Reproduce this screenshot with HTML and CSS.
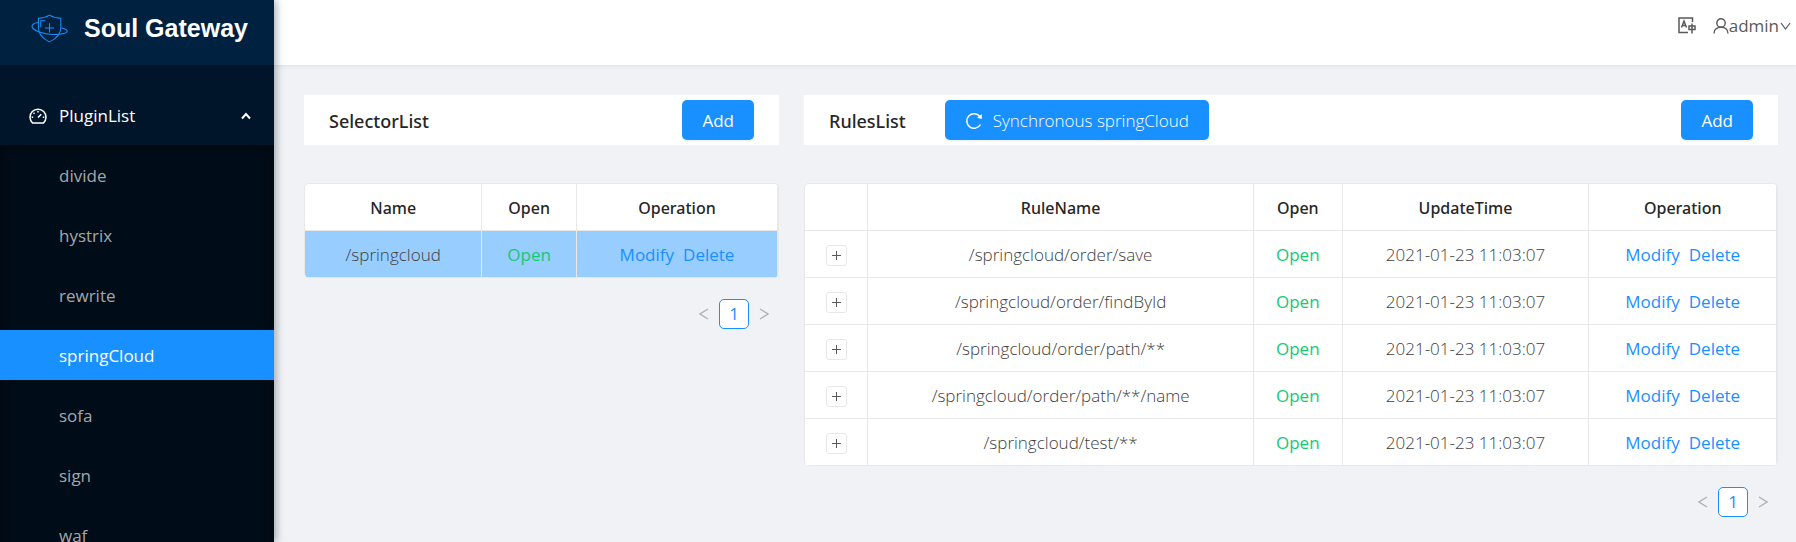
FILE: index.html
```html
<!DOCTYPE html>
<html lang="en">
<head>
<meta charset="utf-8">
<title>Soul Gateway</title>
<link rel="stylesheet" href="styles.css">
</head>
<body>
<div class="app">
  <aside class="sidebar">
    <div class="brand">
      <svg class="brand-logo" viewBox="0 0 36 28" aria-hidden="true">
        <path d="M18 1 C14.500 3.200 11 4 7.200 4 V13 C7.200 20 11.500 24 18 27 C24.500 24 29 20 29 13 V4 C25.500 4 21.500 3.200 18 1 Z"/>
        <path d="M7 8 C2.500 9 .500 10.500 1 12.300 C2 16 12 19.500 21 19.800 C30 20 35.500 18.500 35.200 16.500 C35 15 32.500 14 29.500 13.200"/>
        <path d="M9.500 13 V6.500 H14 M18 9 V18 M13.500 13.500 H22.500"/>
      </svg>
      <h1 class="brand-name">Soul Gateway</h1>
    </div>
    <nav class="menu">
      <button class="menu-title" type="button" aria-expanded="true">
        <svg class="icon-dash" viewBox="0 0 18 16" aria-hidden="true">
          <path d="M3.500 15 A8 8 0 1 1 14.500 15 Z"/>
          <path d="M9 9.500 L12.300 6.200 M9 3 V4.500 M4.500 4.800 L5.500 5.800 M2.700 9.200 H4.200 M13.800 9.200 H15.300"/>
        </svg>
        <span class="menu-label">PluginList</span>
        <svg class="icon-up" viewBox="0 0 10 8" aria-hidden="true"><path d="M1 6.500 L5 2 L9 6.500"/></svg>
      </button>
      <div class="submenu">
        <a class="menu-item" href="#">divide</a>
        <a class="menu-item" href="#">hystrix</a>
        <a class="menu-item" href="#">rewrite</a>
        <a class="menu-item active" href="#">springCloud</a>
        <a class="menu-item" href="#">sofa</a>
        <a class="menu-item" href="#">sign</a>
        <a class="menu-item" href="#">waf</a>
      </div>
    </nav>
  </aside>
  <div class="page">
    <header class="topbar">
      <button class="top-action" type="button" aria-label="Language">
        <svg class="icon-lang" viewBox="0 0 18 17" aria-hidden="true">
          <path d="M14.500 5 V1 H1 V15.500 H10"/>
          <path d="M3.500 10.500 L6 4 L8.500 10.500 M4.500 8.500 H7.500"/>
          <path d="M11 9 H17 V12.500 H11 Z M14 6.500 V16.500"/>
        </svg>
      </button>
      <button class="top-action" type="button">
        <svg class="icon-user" viewBox="0 0 16 16" aria-hidden="true">
          <circle cx="8" cy="5" r="4.200"/>
          <path d="M1 15.500 C1 11.500 4 9.300 8 9.300 C12 9.300 15 11.500 15 15.500"/>
        </svg>
        <span>admin</span>
        <svg class="icon-down" viewBox="0 0 11 8" aria-hidden="true"><path d="M1 1 L5.500 7 L10 1"/></svg>
      </button>
    </header>
    <main class="content">
      <section class="panel">
        <div class="panel-head">
          <h2 class="panel-title">SelectorList</h2>
          <button class="btn push" type="button">Add</button>
        </div>
        <div class="table-frame">
        <table class="grid-table">
          <colgroup><col class="s-name"><col class="s-open"><col class="s-op"></colgroup>
          <thead><tr><th>Name</th><th>Open</th><th>Operation</th></tr></thead>
          <tbody>
            <tr class="selected"><td>/springcloud</td><td class="open">Open</td><td><a href="#">Modify</a><a href="#">Delete</a></td></tr>
          </tbody>
        </table>
        </div>
        <div class="pager">
          <button class="pager-arrow" type="button" aria-label="Previous"><svg viewBox="0 0 10 14"><path d="M9 2 L1 7 L9 12"/></svg></button>
          <button class="pager-page" type="button">1</button>
          <button class="pager-arrow" type="button" aria-label="Next"><svg viewBox="0 0 10 14"><path d="M1 2 L9 7 L1 12"/></svg></button>
        </div>
      </section>
      <section class="panel">
        <div class="panel-head">
          <h2 class="panel-title">RulesList</h2>
          <button class="btn sync" type="button">
            <svg class="icon-reload" viewBox="0 0 18 18" aria-hidden="true"><path d="M15.500 12.500 A7.300 7.300 0 1 1 15 4.700"/><path class="solid" d="M16.800 2 V7 L12 5.800 Z"/></svg>
            <span>Synchronous springCloud</span>
          </button>
          <button class="btn push" type="button">Add</button>
        </div>
        <div class="table-frame">
        <table class="grid-table">
          <colgroup><col class="r-exp"><col class="r-name"><col class="r-open"><col class="r-time"><col class="r-op"></colgroup>
          <thead><tr><th></th><th>RuleName</th><th>Open</th><th>UpdateTime</th><th>Operation</th></tr></thead>
          <tbody>
            <tr><td><button class="expand" type="button" aria-label="Expand"></button></td><td>/springcloud/order/save</td><td class="open">Open</td><td>2021-01-23 11:03:07</td><td><a href="#">Modify</a><a href="#">Delete</a></td></tr>
            <tr><td><button class="expand" type="button" aria-label="Expand"></button></td><td>/springcloud/order/findById</td><td class="open">Open</td><td>2021-01-23 11:03:07</td><td><a href="#">Modify</a><a href="#">Delete</a></td></tr>
            <tr><td><button class="expand" type="button" aria-label="Expand"></button></td><td>/springcloud/order/path/**</td><td class="open">Open</td><td>2021-01-23 11:03:07</td><td><a href="#">Modify</a><a href="#">Delete</a></td></tr>
            <tr><td><button class="expand" type="button" aria-label="Expand"></button></td><td>/springcloud/order/path/**/name</td><td class="open">Open</td><td>2021-01-23 11:03:07</td><td><a href="#">Modify</a><a href="#">Delete</a></td></tr>
            <tr><td><button class="expand" type="button" aria-label="Expand"></button></td><td>/springcloud/test/**</td><td class="open">Open</td><td>2021-01-23 11:03:07</td><td><a href="#">Modify</a><a href="#">Delete</a></td></tr>
          </tbody>
        </table>
        </div>
        <div class="pager">
          <button class="pager-arrow" type="button" aria-label="Previous"><svg viewBox="0 0 10 14"><path d="M9 2 L1 7 L9 12"/></svg></button>
          <button class="pager-page" type="button">1</button>
          <button class="pager-arrow" type="button" aria-label="Next"><svg viewBox="0 0 10 14"><path d="M1 2 L9 7 L1 12"/></svg></button>
        </div>
      </section>
    </main>
  </div>
</div>
</body>
</html>
```
FILE: styles.css
```css
* { box-sizing: border-box; }
body {
  margin: 0;
  font: 300 17px/26px "Open Sans", "Noto Sans", sans-serif;
  color: #404040;
  background: #f0f2f5;
}
button {
  font: inherit;
  color: inherit;
  border: 0;
  padding: 0;
  background: none;
  cursor: pointer;
}
a { color: #1890ff; text-decoration: none; }
svg { fill: none; stroke: currentColor; flex: none; }

.app { display: flex; height: 100vh; overflow: hidden; }

.sidebar {
  flex: 0 0 274px;
  overflow: hidden;
  background: #001529;
  box-shadow: 2px 0 8px rgba(0, 21, 41, .35);
  z-index: 1;
}
.brand {
  display: flex;
  align-items: center;
  gap: 16px;
  height: 65px;
  padding: 0 0 9px 31px;
  background: #002140;
}
.brand-logo { width: 37px; height: 29px; color: #1890ff; stroke-width: 1; }
.brand-name {
  margin: 0;
  font: 700 25px/30px "Liberation Sans", Arial, sans-serif;
  color: #fff;
}
.menu { padding-top: 20px; font-weight: 400; }
.menu-title {
  display: flex;
  align-items: center;
  width: 100%;
  height: 60px;
  padding: 2px 23px 0 29px;
  color: #fff;
}
.icon-dash { width: 18px; height: 16px; stroke-width: 1.5; }
.menu-label { margin-left: 12px; margin-right: auto; }
.icon-up { width: 10px; height: 8px; stroke-width: 2; }
.submenu {
  display: flex;
  flex-direction: column;
  gap: 10px;
  padding: 5px 0;
  background: #000c17;
  box-shadow: inset 0 2px 8px rgba(0, 0, 0, .45);
}
.menu-item {
  padding: 2px 59px 0;
  line-height: 48px;
  color: rgba(255, 255, 255, .65);
}
.menu-item.active { color: #fff; background: #1890ff; }

.page { flex: 1; min-width: 0; }
.topbar {
  display: flex;
  justify-content: flex-end;
  gap: 17px;
  height: 65px;
  padding: 0 5px 14px 0;
  color: #595959;
  font-weight: 400;
  background: #fff;
  box-shadow: 0 1px 4px rgba(0, 21, 41, .08);
}
.top-action { display: flex; align-items: center; }
.icon-lang { width: 18px; height: 17px; stroke-width: 1.5; }
.icon-user { width: 16px; height: 16px; stroke-width: 1.4; }
.icon-down { width: 11px; height: 8px; margin-left: 1px; stroke-width: 1.2; }

.content {
  display: grid;
  grid-template-columns: minmax(0, 475fr) minmax(0, 974fr);
  gap: 25px;
  padding: 30px 18px 0 30px;
}
.panel-head {
  display: flex;
  align-items: center;
  height: 50px;
  padding: 0 25px;
  background: #fff;
}
.panel-title {
  margin: 0;
  padding-top: 2px;
  font-family: "Noto Sans", "Open Sans", sans-serif;
  font-size: 18px;
  font-weight: 500;
  color: #262626;
}
.btn {
  display: flex;
  align-items: center;
  gap: 10px;
  height: 40px;
  padding: 2px 20px 0;
  border-radius: 5px;
  color: #fff;
  font-weight: 400;
  background: #1890ff;
  box-shadow: 0 2px 0 rgba(0, 0, 0, .04);
}
.push { margin-left: auto; }
.sync { margin-left: 39px; font-weight: 300; }
.icon-reload { width: 18px; height: 18px; stroke-width: 1.5; }
.solid { fill: currentColor; stroke: none; }

.table-frame {
  margin-top: 38px;
  border: 1px solid #e8e8e8;
  border-bottom: 0;
  border-radius: 5px;
  background: #fff;
  overflow: hidden;
}
.grid-table {
  width: 100%;
  table-layout: fixed;
  border-collapse: separate;
  border-spacing: 0;
  text-align: center;
}
.grid-table th, .grid-table td {
  height: 47px;
  padding: 2px 0 0;
  border-right: 1px solid #e8e8e8;
  border-bottom: 1px solid #e8e8e8;
}
.grid-table th {
  font-family: "Noto Sans", "Open Sans", sans-serif;
  font-size: 16px;
  font-weight: 500;
  color: #262626;
}
.grid-table a, .grid-table .open { font-weight: 400; }
.grid-table a + a { margin-left: 9px; }
.selected td { background: #97cdff; }
.open { color: #14c974; }
.s-name { width: 37.5%; }
.s-open { width: 20%; }
.r-exp { width: 6.5%; }
.r-open { width: 9.1%; }
.r-time { width: 25.4%; }
.r-op { width: 19.3%; }

.expand {
  display: block;
  width: 21px;
  height: 21px;
  margin: 0 auto;
  border: 1px solid #e8e8e8;
  border-radius: 3px;
  background:
    linear-gradient(#595959, #595959) center / 9px 1px no-repeat,
    linear-gradient(#595959, #595959) center / 1px 9px no-repeat,
    #fff;
}

.pager { display: flex; justify-content: flex-end; margin-top: 21px; }
.pager-arrow {
  display: grid;
  place-items: center;
  width: 30px;
  height: 30px;
  color: #b0b0b0;
}
.pager-arrow svg { width: 10px; height: 14px; stroke-width: 1.4; }
.pager-page {
  width: 30px;
  height: 30px;
  border: 1px solid #1890ff;
  border-radius: 5px;
  color: #1890ff;
  font-weight: 400;
  line-height: 26px;
  background: #fff;
}
```
